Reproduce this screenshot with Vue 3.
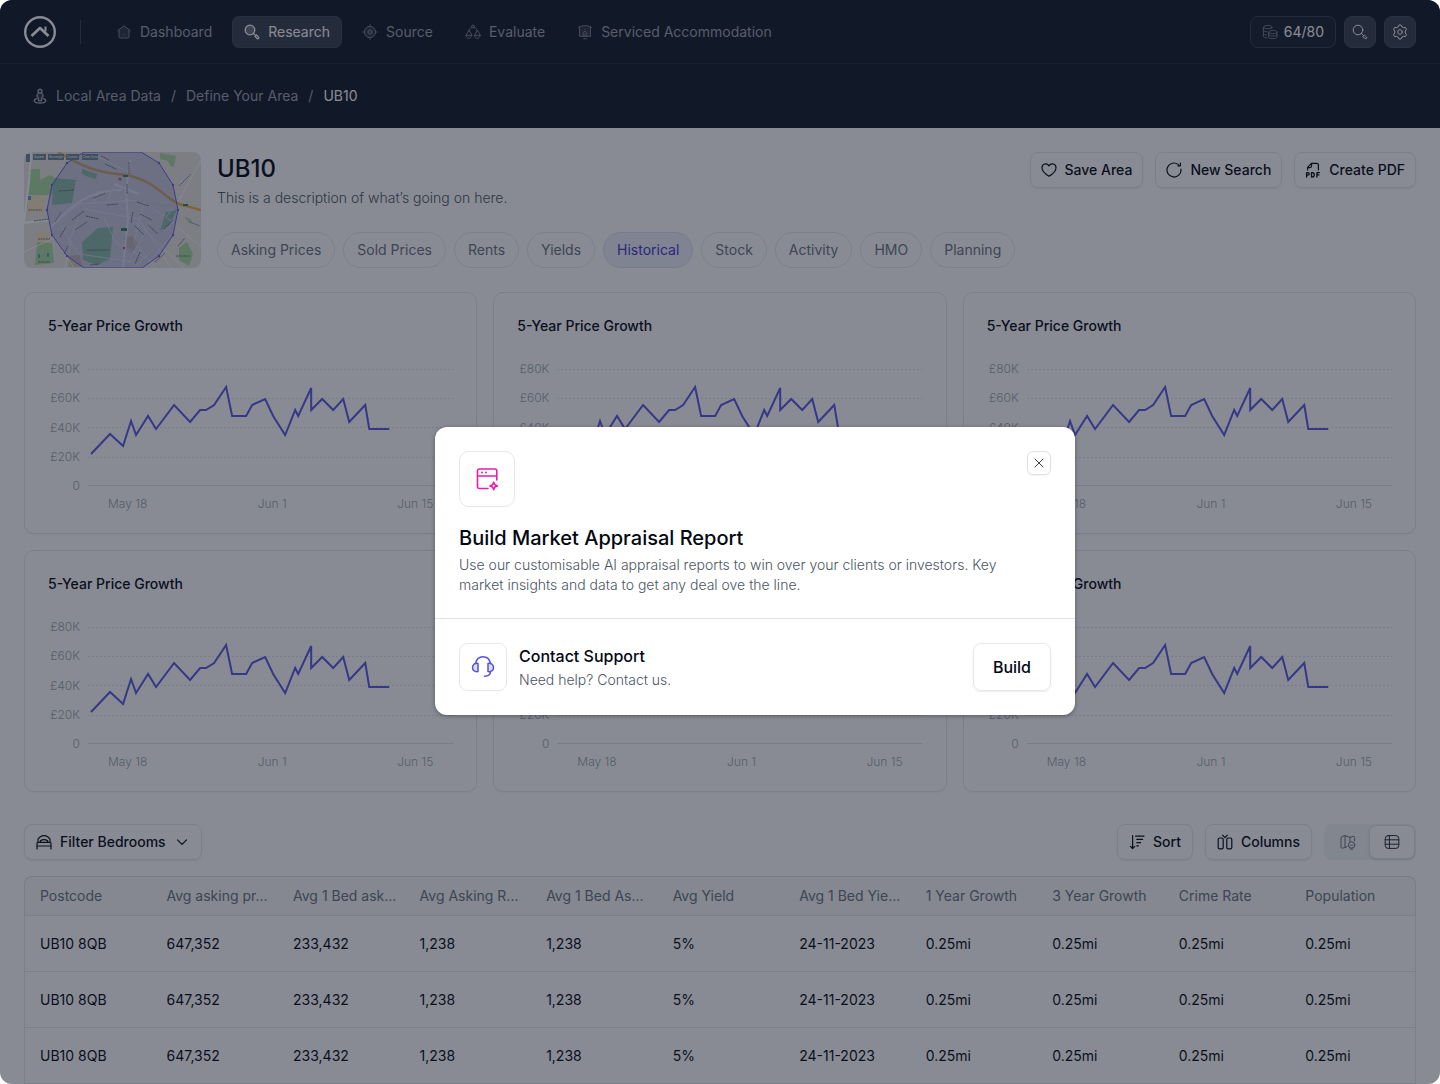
<script setup>
import { ref } from 'vue'

const nav = [
  { label: 'Dashboard', icon: 'home' },
  { label: 'Research', icon: 'search', active: true },
  { label: 'Source', icon: 'target' },
  { label: 'Evaluate', icon: 'scales' },
  { label: 'Serviced Accommodation', icon: 'building' },
]

const icons = {
  home: '<path class="tint" d="M2 6.4 8 2l6 4.4-1 7.6H3z"/><path d="M1.8 6.6 8 1.8l6.2 4.8M3 6v6.6c0 .9.5 1.4 1.4 1.4h7.2c.9 0 1.4-.5 1.4-1.4V6"/><path d="M8 10.4v.4"/>',
  search: '<circle class="tint" cx="6" cy="6" r="4.8"/><circle cx="6" cy="6" r="4.8"/><path d="m9.5 9.5 1.6 1.6M11 12.4l1.4-1.4 2.1 2.1c.9.9-.5 2.3-1.4 1.4z"/>',
  target: '<circle class="tint" cx="8" cy="8" r="5.6"/><circle cx="8" cy="8" r="5.6"/><circle class="tint" cx="8" cy="8" r="2.2"/><circle cx="8" cy="8" r="2.2"/><path d="M8 .8v1.6M8 13.6v1.6M.8 8h1.6M13.6 8h1.6"/>',
  scales: '<circle cx="8" cy="2.5" r="1.4"/><path d="M6.9 3.4C5 4.2 4 5.4 3.8 7M9.1 3.4C11 4.2 12 5.4 12.2 7M3.8 6.6.9 11.4h5.8zM12.2 6.6l-2.9 4.8h5.8zM.9 11.4c.3 4 5.5 4 5.8 0M9.3 11.4c.3 4 5.5 4 5.8 0"/>',
  building: '<path class="tint" d="M2.5 2.5h11v10h-11z"/><path d="M1.6 3.4C4.6 1 11.4 1 14.4 3.4M2.6 2.8v9.6h10.8V2.8M6.6 14.8h2.8M6.2 12.2V8.6c0-1.4 3.6-1.4 3.6 0v3.6M8 9.8v2.4M8 5.2v.3"/>',
  pin: '<circle class="tint" cx="8" cy="3.2" r="2"/><circle cx="8" cy="3.2" r="2"/><path class="tint" d="M5.4 6.6h5.2L9.6 12H6.4z"/><path d="M6.2 5.6C4.6 6.8 4.6 8.8 6 9.8l.5 2.8h3l.5-2.8c1.400-1 1.400-3-.2-4.200M4.400 10.600C1 11.600 1.200 15 8 15s7-3.400 3.600-4.400"/>',
  coins: '<path d="M1.4 3c0-2.2 8.4-2.2 8.4 0s-8.4 2.2-8.4 0v9.400c0 .8 1.600 1.400 3.600 1.500M9.800 3v1.600M1.400 6.200c0 1 1.800 1.600 3.800 1.600M1.400 9.300c0 1 1.400 1.500 3.200 1.600M6.600 8c0-2.200 8.400-2.200 8.400 0s-8.400 2.200-8.400 0v5c0 2.200 8.400 2.200 8.400 0V8M6.600 10.500c0 2.200 8.400 2.200 8.400 0"/>',
  gear: '<path d="M6 2.9 7 1h2l1 1.9 1.3.7 2.1-.1 1 1.7L13.3 7v2l1.100 1.800-1 1.700-2.100-.1-1.300.7L9 15H7l-1-1.900-1.300-.7-2.100.1-1-1.700L2.700 9V7L1.600 5.200l1-1.700 2.100.1z"/><circle cx="8" cy="8" r="2.3"/>',
  heart: '<path d="M8 14.200C5.400 12.700 1 9.700 1 5.800c0-4 4.800-5.400 7-2 2.200-3.400 7-2 7 2 0 3.900-4.400 6.900-7 8.400z"/>',
  refresh: '<path d="M14.900 7A7 7 0 1 1 12.400 2.600M14.400 1v2.800h-2.600"/>',
  pdf: '<path d="M2.6 8V5.400L6.400 1.400h5.400c1 0 1.600.6 1.600 1.600V8M6.600 1.600v2.200c0 1.200-.5 1.800-1.700 1.800H2.800"/><path stroke-width="1.3" d="M1.600 15v-4.400h1.200c1.900 0 1.900 2.500 0 2.500H1.600M6.500 10.600V15h.8c2.600 0 2.600-4.400 0-4.400zM11.900 15v-4.400h2.500M11.900 12.800h2.100"/>',
  bed: '<path d="M1 15V9.600c0-.8.5-1.200 1.200-1.200h11.600c.7 0 1.200.4 1.200 1.200V15M1 12h14M2 8.400V5.200l2-2.300C6.400 1.300 9.600 1.300 12 2.900l2 2.300v3.200M4.400 8.200V6.700c2-1.300 5.200-1.300 7.200 0v1.500"/>',
  chevron: '<path d="m3.5 5.8 4.5 4.5 4.500-4.500"/>',
  sort: '<path d="M3.600 1.500v13M1.400 12.300l2.200 2.200 2.200-2.200M6.600 2.200h8.400M7.800 5.400h5.800M7.800 8.600h3.800M7.800 11.800h1.600"/>',
  columns: '<rect x="1.2" y="4" width="5" height="10.8" rx="1.4"/><rect x="9.8" y="4" width="5" height="10.8" rx="1.4"/><path d="m5.600 1.200 2.400 2.400 2.400-2.400"/>',
  map: '<path d="M7 12.600 5 13.400l-2.600.8c-.8.200-1.400-.2-1.400-1V4c0-.7.300-1.200 1-1.400l3-1 5 1.800 3.200-1c.8-.2 1.400.2 1.400 1V7M5 1.600v11.800M10 3.400V7.400"/><circle cx="11.6" cy="11" r="3.2"/><path d="M10.400 11c.8.8 1.600.8 2.400 0M10.200 15h2.800"/>',
  grid: '<rect x="1.2" y="1.6" width="13.6" height="12.800" rx="3"/><path d="M5.400 1.600v12.800M1.200 5.800h13.600M1.200 10.200h13.600"/>',
  close: '<path d="m4 4 8 8M12 4l-8 8"/>',
}

const tabs = ['Asking Prices', 'Sold Prices', 'Rents', 'Yields', 'Historical', 'Stock', 'Activity', 'HMO', 'Planning']
const activeTab = ref('Historical')

const actions = [
  { label: 'Save Area', icon: 'heart' },
  { label: 'New Search', icon: 'refresh' },
  { label: 'Create PDF', icon: 'pdf' },
]

const areaCorners = [[43, 11], [135, 11], [149, 33], [154, 58], [149, 83], [135, 104], [43, 104], [28, 83], [23, 58], [28, 33]]

const scale = ['£80K', '£60K', '£40K', '£20K', '0']
const guides = [0.5, 29.5, 58.5, 88.5]
const dates = ['May 18', 'Jun 1', 'Jun 15']
const trend =
  '3,85 22,65 35,77 43,52 48,66 60,47 68,60 86,36 102,53 112,41 118,41 126,36 138,18 144,47 158,47 164,36 177,30 185,47 197,66 207,41 210,47 223,19 223,41 234,30 245,41 255,30 261,53 277,36 281,60 301,60'

const columns = ['Postcode', 'Avg asking pr...', 'Avg 1 Bed ask...', 'Avg Asking R...', 'Avg 1 Bed As...', 'Avg Yield', 'Avg 1 Bed Yie...', '1 Year Growth', '3 Year Growth', 'Crime Rate', 'Population']
const row = ['UB10 8QB', '647,352', '233,432', '1,238', '1,238', '5%', '24-11-2023', '0.25mi', '0.25mi', '0.25mi', '0.25mi']
const rows = [row, row, row]
</script>

<template>
  <div class="app">
    <header class="top">
      <div class="bar">
        <a class="logo" href="#" aria-label="Home">
          <svg viewBox="0 0 32 32" fill="none" stroke="#fff">
            <circle cx="16" cy="16" r="14.8" stroke-width="2.4" />
            <path d="M7.500 20 16 12l8.500 8" stroke-width="2.8" stroke-linejoin="round" />
            <path d="M21.500 10.500v5" stroke-width="2" />
          </svg>
        </a>
        <span class="rule"></span>
        <nav class="nav">
          <a v-for="n in nav" :key="n.label" href="#" :class="{ active: n.active }">
            <svg class="icon" viewBox="0 0 16 16" v-html="icons[n.icon]"></svg>{{ n.label }}
          </a>
        </nav>
        <div class="tools">
          <button class="credits"><svg class="icon" viewBox="0 0 16 16" v-html="icons.coins"></svg>64/80</button>
          <button class="square" aria-label="Search"><svg class="icon" viewBox="0 0 16 16" v-html="icons.search"></svg></button>
          <button class="square" aria-label="Settings"><svg class="icon" viewBox="0 0 16 16" v-html="icons.gear"></svg></button>
        </div>
      </div>
      <nav class="crumbs" aria-label="Breadcrumb">
        <a href="#"><svg class="icon" viewBox="0 0 16 16" v-html="icons.pin"></svg>Local Area Data</a>
        <span>/</span>
        <a href="#">Define Your Area</a>
        <span>/</span>
        <a class="current" href="#">UB10</a>
      </nav>
    </header>

    <main class="main">
      <section class="intro">
        <svg class="map" viewBox="0 0 177 116" role="img" aria-label="Map of UB10">
          <rect width="177" height="116" fill="#e6e4e1" />
          <g fill="#a9dba0">
            <path d="M6 17h10v11l10-5 6 4-2 15-13 2-2 12H3zM136 1l16 3-2 11-4-1-2-5-8-2zM13 90l15 1 2 20-19 2zM155 96l8-6 6 12-4 12-10-6zM160 64l8 4-2 4z" />
          </g>
          <path fill="#f0e3bd" d="M4 43h16v18H4zM12 80h14v10H12z" />
          <path fill="#8fd09c" d="m30 26 22 2-4 23-20 2zM58 17l15 5-1 5-14-4zM58 90l16-14 15-1-3 32-13 6-14-5zM142 60l11-2-8 15-9 6z" />
          <path fill="#d6c9b4" d="m100 85 9-1 5 8-6 9-7-4zM44 104l12-1 2 12H45z" />
          <g fill="none" stroke="#fff">
            <path stroke-width="2" d="M7 0 5 30 0 70M106 8l-4 32 2 27-5 49M0 71l26-3M26 76c20-20 35-38 72-38M90 32l25 10" />
            <path stroke-width=".8" d="M35 70l12 20-6 26M35 70l20-18 60-4 25 16M60 57l55 10 32 49M55 65l-10 25 10 12 55 8M75 5l30 15M80 66l12 25 30 15M120 50l-10 40 22 26M127 70l-20 35M110 68l50 48M130 96l-20 20M150 80l-25 30M177 95l-35-30 12-15 23-42M0 100l30-14 20 30M70 51l4-12M84 49l5-14" />
          </g>
          <path fill="none" stroke="#ecdcc9" d="M55 20c30 20 60 33 99 35" />
          <path fill="none" stroke="#e8b450" stroke-width="2.5" d="M34 0C60 16 75 21 103 23c30 7 36 22 52 29l22 6" />
          <path d="m43 11 17-11h57l18 11 14 22 5 25-5 25-14 21-17 12H60l-17-12-15-21-5-25 5-25z" fill="#7471d8" fill-opacity=".25" stroke="#6d5ce8" />
          <g fill="#6d5ce8">
            <circle v-for="[x, y] in areaCorners" :key="`${x}-${y}`" :cx="x" :cy="y" r="1.2" />
          </g>
          <path fill="none" stroke="#5d5b68" stroke-width=".8" stroke-dasharray="2 .6" d="m77 4 8 4M81 12l11 5M70 46l12-5M83 53l11-1M113 50l12 4M116 62l12 6M109 60l-2 11M62 64l13 3M48 68l12-9M51 78l12-8M36 85l6-10M111 74l9 9M124 73l10 9M140 77l9-9M116 100l-5 12M131 110l10-9M105 10v12M103 32v10M10 69l15-2M40 102l4-8M66 113l9-1M154 94l7-8M35 39l15-1M63 98h22M4 58h14M14 87h12M14 110h12M152 104h14" />
          <path fill="none" stroke="#6d88c3" stroke-dasharray="2 .6" d="m155 34 12-12M31 70l6-10M166 70l10 4" />
          <path fill="#388260" d="M99 23h5v2h-5zM159 52h5v2h-5zM97 76h6v3h-6z" />
          <path fill="#579fd4" d="M4 44h3v4H4zM14 102h2v4h-2zM23 101h2v4h-2z" />
          <circle cx="96" cy="27" r="1.5" fill="#d0498b" />
          <circle cx="100" cy="96" r="1.2" fill="#d0498b" />
          <path fill="#6d8699" d="M2 2h4v8H2zM9 2h13v6H9zM24 2h16v6H24zM42 2h13v6H42zM58 2h16v6H58z" />
          <g fill="#fff" font-size="3" text-anchor="middle">
            <text x="15" y="6">Square</text><text x="32" y="6">Rectangle</text><text x="48" y="6">Custom</text><text x="66" y="6">Clear Area</text>
          </g>
        </svg>
        <div class="about">
          <div class="heading">
            <div>
              <h1>UB10</h1>
              <p>This is a description of what’s going on here.</p>
            </div>
            <div class="group">
              <button v-for="a in actions" :key="a.label" class="btn"><svg class="icon" viewBox="0 0 16 16" v-html="icons[a.icon]"></svg>{{ a.label }}</button>
            </div>
          </div>
          <div class="tabs">
            <button v-for="t in tabs" :key="t" :class="{ active: t === activeTab }" @click="activeTab = t">{{ t }}</button>
          </div>
        </div>
      </section>

      <section class="cards">
        <article v-for="c in 6" :key="c" class="card">
          <h2>5-Year Price Growth</h2>
          <div class="chart">
            <div class="scale"><span v-for="s in scale" :key="s">{{ s }}</span></div>
            <div class="plot">
              <svg viewBox="0 0 365 117" preserveAspectRatio="none" aria-hidden="true">
                <path v-for="y in guides" :key="y" class="guide" :d="`M0 ${y}H365`" />
                <path class="base" d="M0 116.500H365" />
                <polyline class="trend" :points="trend" />
              </svg>
              <div class="dates"><span v-for="d in dates" :key="d">{{ d }}</span></div>
            </div>
          </div>
        </article>
      </section>

      <section class="toolbar">
        <label class="btn filter">
          <svg class="icon" viewBox="0 0 16 16" v-html="icons.bed"></svg>
          <select aria-label="Filter Bedrooms"><option>Filter Bedrooms</option></select>
          <svg class="icon" viewBox="0 0 16 16" v-html="icons.chevron"></svg>
        </label>
        <div class="group">
          <button class="btn"><svg class="icon" viewBox="0 0 16 16" v-html="icons.sort"></svg>Sort</button>
          <button class="btn"><svg class="icon" viewBox="0 0 16 16" v-html="icons.columns"></svg>Columns</button>
          <div class="switch">
            <button aria-label="Map view"><svg class="icon" viewBox="0 0 16 16" v-html="icons.map"></svg></button>
            <button class="on" aria-label="Table view"><svg class="icon" viewBox="0 0 16 16" v-html="icons.grid"></svg></button>
          </div>
        </div>
      </section>

      <div class="frame">
        <table>
          <thead>
            <tr><th v-for="h in columns" :key="h" scope="col">{{ h }}</th></tr>
          </thead>
          <tbody>
            <tr v-for="(r, i) in rows" :key="i"><td v-for="(v, j) in r" :key="j">{{ v }}</td></tr>
          </tbody>
        </table>
      </div>
    </main>

    <div class="overlay">
      <section class="dialog" role="dialog" aria-modal="true" aria-labelledby="dialog-title">
        <div class="body">
          <div class="badges">
            <span class="tile large">
              <svg viewBox="0 0 24 24" fill="none" stroke="#e81cae" stroke-width="1.6" stroke-linecap="round" stroke-linejoin="round">
                <path d="M13 21.500H4.500c-1.300 0-2-.7-2-2V4c0-1.300.7-2 2-2h15.300c1.300 0 2 .7 2 2v9M2.500 9h19.300" />
                <path stroke-width="1.8" d="M7 5.500h.1M11 5.500h.1" />
                <path d="m18.700 15.200 1.100 2.600 2.600 1.100-2.600 1.100-1.100 2.600-1.100-2.600L15 18.900l2.600-1.100z" />
              </svg>
            </span>
            <button class="close" aria-label="Close"><svg class="icon" viewBox="0 0 16 16" v-html="icons.close"></svg></button>
          </div>
          <h2 id="dialog-title">Build Market Appraisal Report</h2>
          <p>Use our customisable AI appraisal reports to win over your clients or investors. Key market insights and data to get any deal ove the line.</p>
        </div>
        <footer class="foot">
          <span class="tile">
            <svg viewBox="0 0 24 24" fill="none" stroke="#5450e6" stroke-width="1.5" stroke-linecap="round" stroke-linejoin="round">
              <path d="M7 8.500v8c-3.500.7-5.500-1.300-5.500-4s2-4.700 5.500-4zM17 8.500v8c3.500.7 5.500-1.300 5.500-4s-2-4.700-5.500-4z" fill="#dcdcfb" />
              <path d="M4.500 8.500C5.500 4 8.500 1.800 12 1.800s6.500 2.200 7.500 6.700M19.500 16.500c0 3-2 4.700-6 4.700" />
            </svg>
          </span>
          <div class="support">
            <h3>Contact Support</h3>
            <p>Need help? Contact us.</p>
          </div>
          <button class="build">Build</button>
        </footer>
      </section>
    </div>
  </div>
</template>

<style>
body {
  margin: 0;
  background: #fff;
}
</style>

<style scoped>
* {
  box-sizing: border-box;
}
.app {
  position: relative;
  overflow: hidden;
  border-radius: 12px;
  background: #fff;
  color: #030712;
  font: 400 14px/20px Inter, "Noto Sans", sans-serif;
}
h1, h2, h3, p {
  margin: 0;
  font-weight: 500;
}
p {
  color: #4b5563;
  font-weight: 300;
}
a {
  color: inherit;
  text-decoration: none;
}
button, select {
  padding: 0;
  border: 0;
  background: none;
  color: inherit;
  font: inherit;
}
.icon {
  flex: none;
  width: 16px;
  height: 16px;
  fill: none;
  stroke: currentColor;
  stroke-linecap: round;
  stroke-linejoin: round;
}
.icon :deep(.tint) {
  fill: currentColor;
  fill-opacity: 0.25;
  stroke: none;
}

.top {
  background: #111827;
  color: #9ca3af;
}
.bar {
  display: flex;
  align-items: center;
  height: 64px;
  padding: 0 24px;
  border-bottom: 1px solid #1f2937;
}
.logo, .logo svg {
  display: block;
  width: 32px;
  height: 32px;
}
.rule {
  width: 1px;
  height: 24px;
  margin: 0 23px 0 24px;
  background: #374151;
}
.nav {
  display: flex;
  gap: 8px;
}
.nav a {
  display: flex;
  align-items: center;
  gap: 8px;
  height: 32px;
  padding: 0 12px;
  border-radius: 8px;
  white-space: nowrap;
}
.nav .icon {
  opacity: 0.75;
}
.nav .active {
  background: #374151;
  box-shadow: inset 0 0 0 1px #414b5a;
  color: #fff;
}
.nav .active .icon {
  opacity: 1;
  stroke-width: 1.3;
}
.tools {
  display: flex;
  gap: 8px;
  margin-left: auto;
  color: #fff;
}
.tools button {
  display: flex;
  align-items: center;
  justify-content: center;
  gap: 6px;
  height: 32px;
  border: 1px solid #374151;
  border-radius: 8px;
}
.tools .credits {
  padding: 0 11px;
  background: #17212f;
}
.credits .icon {
  opacity: 0.4;
}
.tools .square {
  width: 32px;
  border-color: #434d5c;
  background: #374151;
}
.square :deep(.tint) {
  fill: none;
}
.crumbs {
  display: flex;
  align-items: center;
  gap: 10px;
  height: 64px;
  padding: 0 32px;
}
.crumbs a {
  display: flex;
  align-items: center;
  gap: 8px;
}
.crumbs .icon {
  stroke-width: 1.3;
}
.crumbs .current {
  color: #fff;
}

.main {
  padding: 24px 24px 0;
}
.intro {
  display: flex;
  gap: 16px;
}
.map {
  flex: none;
  width: 177px;
  height: 116px;
  border-radius: 8px;
}
.about {
  display: flex;
  flex: 1;
  flex-direction: column;
  justify-content: space-between;
}
.heading {
  display: flex;
  align-items: flex-start;
  justify-content: space-between;
}
h1 {
  margin-bottom: 2px;
  font-size: 24px;
  line-height: 34px;
}
.group {
  display: flex;
  gap: 12px;
}
.btn {
  display: flex;
  align-items: center;
  gap: 8px;
  height: 36px;
  padding: 0 11px;
  border: 1px solid #e5e7eb;
  border-radius: 8px;
  box-shadow: 0 1px 2px rgba(0, 0, 0, 0.08);
  font-weight: 500;
  white-space: nowrap;
}
.heading .btn {
  padding: 0 10px;
}
.btn .icon {
  stroke-width: 1.2;
}
.tabs {
  display: flex;
  gap: 8px;
}
.tabs button {
  height: 36px;
  padding: 0 13px;
  border: 1px solid #e5e7eb;
  border-radius: 18px;
  color: #6b7280;
}
.tabs .active {
  border-color: #dddcf8;
  background: #eeeefd;
  color: #4338ca;
}

.cards {
  display: grid;
  grid-template-columns: repeat(3, 1fr);
  gap: 16px;
  margin-top: 24px;
}
.card {
  padding: 23px 23px 19px;
  border: 1px solid #e5e7eb;
  border-radius: 10px;
  box-shadow: 0 1px 2px rgba(0, 0, 0, 0.05);
}
.card h2 {
  font-size: 14px;
  line-height: 20px;
}
.chart {
  display: flex;
  gap: 8px;
  margin-top: 23px;
  color: #9ca3af;
  font-size: 12px;
  font-weight: 300;
  line-height: 20px;
}
.scale {
  display: flex;
  flex-direction: column;
  justify-content: space-between;
  width: 32px;
  height: 137px;
  text-align: right;
}
.plot {
  flex: 1;
  min-width: 0;
  padding-top: 10px;
}
.plot svg {
  display: block;
  width: 100%;
  height: 117px;
  overflow: visible;
}
.plot path, .plot polyline {
  fill: none;
  vector-effect: non-scaling-stroke;
}
.guide {
  stroke: #e0e3e7;
  stroke-dasharray: 2 2;
}
.base {
  stroke: #dfe2e6;
}
.trend {
  stroke: #5b57e6;
  stroke-width: 2;
}
.dates {
  display: flex;
  justify-content: space-between;
  margin-top: 8px;
  padding: 0 20px;
}

.toolbar {
  display: flex;
  justify-content: space-between;
  margin: 32px 0 16px;
}
.filter select {
  appearance: none;
}
.switch {
  display: flex;
  padding: 2px;
  border-radius: 8px;
  background: #f3f4f6;
}
.switch button {
  display: flex;
  align-items: center;
  justify-content: center;
  width: 44px;
  height: 32px;
  border-radius: 6px;
  color: #6b7280;
}
.switch .on {
  background: #fff;
  box-shadow: 0 0 0 1px #e5e7eb, 0 1px 3px rgba(0, 0, 0, 0.3);
  color: #1f2937;
}

.frame {
  overflow: hidden;
  border-radius: 8px 8px 0 0;
  box-shadow: inset 0 0 0 1px #e5e7eb;
}
table {
  width: 100%;
  border-collapse: separate;
  border-spacing: 0;
  table-layout: fixed;
}
th, td {
  padding: 0 0 0 16px;
  border-bottom: 1px solid #e5e7eb;
  font-weight: 400;
  text-align: left;
  white-space: nowrap;
}
th {
  height: 40px;
  background: rgba(17, 24, 39, 0.03);
  color: #6b7280;
}
td {
  height: 56px;
}

.overlay {
  position: absolute;
  inset: 0;
  display: flex;
  align-items: center;
  justify-content: center;
  padding: 58px 0 0 70px;
  background: rgba(17, 24, 39, 0.5);
}
.dialog {
  width: 640px;
  border-radius: 12px;
  background: #fff;
  box-shadow: 0 1px 4px rgba(0, 0, 0, 0.35);
}
.body {
  padding: 24px 24px 23px;
  border-bottom: 1px solid #dfe1e6;
}
.badges {
  display: flex;
  align-items: flex-start;
  justify-content: space-between;
}
.tile {
  display: flex;
  align-items: center;
  justify-content: center;
  width: 48px;
  height: 48px;
  border: 1px solid #e5e7eb;
  border-radius: 8px;
}
.tile svg {
  width: 24px;
  height: 24px;
}
.large {
  width: 56px;
  height: 56px;
  border-radius: 10px;
}
.close {
  display: flex;
  align-items: center;
  justify-content: center;
  width: 24px;
  height: 24px;
  border: 1px solid #dfe1e6;
  border-radius: 6px;
  box-shadow: 0 1px 2px rgba(0, 0, 0, 0.06);
  color: #374151;
}
.body h2 {
  margin: 17px 0 3px;
  font-size: 20px;
  line-height: 28px;
}
.body p {
  max-width: 550px;
}
.foot {
  display: flex;
  align-items: center;
  gap: 12px;
  padding: 24px;
}
.support {
  flex: 1;
}
h3 {
  margin-bottom: 2px;
  font-size: 16px;
  line-height: 24px;
}
.build {
  height: 48px;
  padding: 0 19px;
  border: 1px solid #e5e7eb;
  border-radius: 8px;
  box-shadow: 0 1px 2px rgba(0, 0, 0, 0.08);
  font-size: 16px;
  font-weight: 500;
}
</style>
